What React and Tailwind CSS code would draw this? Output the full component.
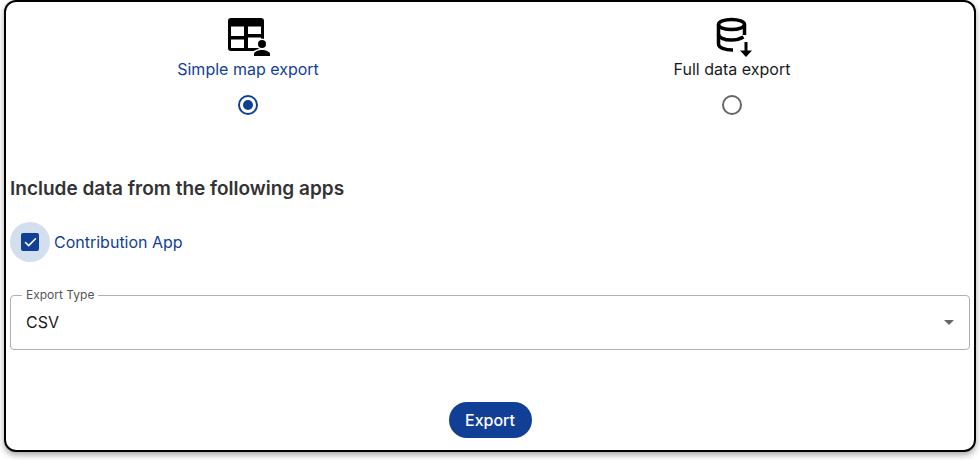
import { Check } from "lucide-react";

const font = { fontFamily: "Inter, sans-serif" };

const TableUserIcon = () => (
  <svg width="46" height="40" viewBox="0 0 46 40" fill="none">
    <path
      fillRule="evenodd"
      d="M6 1h30a3 3 0 0 1 3 3v27a3 3 0 0 1-3 3H6a3 3 0 0 1-3-3V4a3 3 0 0 1 3-3ZM6 9.500V19h13V9.500ZM23 9.500V17h13V9.500ZM6 22.500V31h13v-8.500ZM23 20.500V31h13V20.500Z"
      fill="#000"
    />
    <g stroke="#fff" strokeWidth="3" paintOrder="stroke">
      <circle cx="37" cy="27" r="4" fill="#000" />
      <path d="M29 39v-2c0-2.500 5-4 8-4s8 1.500 8 4v2Z" fill="#000" />
    </g>
  </svg>
);

const DatabaseIcon = () => (
  <svg width="40" height="40" viewBox="0 0 40 40" fill="none">
    <ellipse cx="19.500" cy="7.500" rx="13" ry="5" stroke="#000" strokeWidth="3.500" />
    <path d="M6.500 7.500V27c0 3.500 6 6 14.500 6" stroke="#000" strokeWidth="3.500" />
    <path d="M6.500 17c0 3.500 5.500 6 13 6 4.500 0 8.500-1 12-3" stroke="#000" strokeWidth="3.500" />
    <path d="M32.500 7.500V18" stroke="#000" strokeWidth="3.500" />
    <path d="M34 25v10" stroke="#000" strokeWidth="3" />
    <path d="M28 33.500h12L34 40Z" fill="#000" />
  </svg>
);

const ExportOption = ({ icon: Icon, label, selected }) => (
  <div className="flex flex-col items-center">
    <div className="h-[40px] flex justify-center">
      <Icon />
    </div>
    <span
      className={`text-[16px] leading-[24px] ${selected ? "text-[#123f96]" : "text-[#1a1a1a]"}`}
    >
      {label}
    </span>
    <span
      className={`mt-[14px] w-[20px] h-[20px] rounded-full border-2 flex items-center justify-center ${selected ? "border-[#123f96]" : "border-[#666666]"}`}
    >
      {selected && <span className="w-[10px] h-[10px] rounded-full bg-[#123f96]" />}
    </span>
  </div>
);

export default function App() {
  return (
    <div className="w-[980px] h-[460px] bg-white px-1 overflow-hidden" style={font}>
      <div className="h-[452px] border-2 border-black rounded-xl bg-white shadow-[0_3px_6px_rgba(0,0,0,0.35)] px-1 flex flex-col">
        <div className="grid grid-cols-2 pt-[15px] -mx-1">
          <ExportOption icon={TableUserIcon} label="Simple map export" selected />
          <ExportOption icon={DatabaseIcon} label="Full data export" />
        </div>

        <h2 className="mt-[60px] text-[19px] leading-[28px] font-semibold text-[#333333]">
          Include data from the following apps
        </h2>

        <label className="mt-[19px] flex items-center">
          <span className="w-[40px] h-[40px] rounded-full bg-[#d3deef] flex items-center justify-center">
            <span className="w-[18px] h-[18px] rounded-[2px] bg-[#123f96] flex items-center justify-center">
              <Check size={15} strokeWidth={2.500} color="#ffffff" />
            </span>
          </span>
          <span className="ml-1 text-[16px] text-[#123f96]">Contribution App</span>
        </label>

        <fieldset className="mt-[27px] h-[61px] border border-[#b0b0b0] rounded px-[11px]">
          <legend className="px-[4px] text-[12px] leading-[12px] text-[#555555]">Export Type</legend>
          <div className="h-[42px] pl-[4px] flex items-center justify-between">
            <span className="text-[16px] text-[#1a1a1a]">CSV</span>
            <svg width="24" height="24" viewBox="0 0 24 24" className="-mr-[3px]">
              <path d="M7 10l5 5 5-5z" fill="#666666" />
            </svg>
          </div>
        </fieldset>

        <div className="mt-[52px] flex justify-center">
          <button className="h-[36px] w-[83px] rounded-full bg-[#123f96] text-white text-[16px] font-medium">
            Export
          </button>
        </div>
      </div>
    </div>
  );
}
